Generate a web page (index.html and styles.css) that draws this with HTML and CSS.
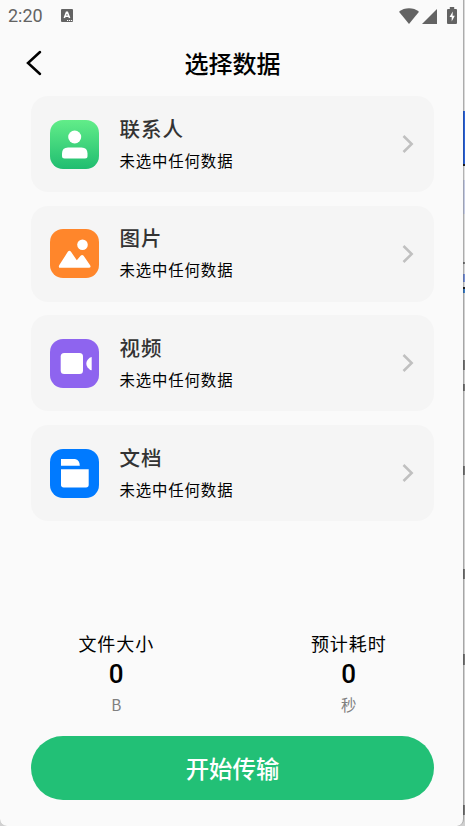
FILE: index.html
```
<!DOCTYPE html>
<html lang="zh-CN">
<head>
    <meta charset="UTF-8">
    <meta name="viewport" content="width=device-width, initial-scale=1.0">
    <title>选择数据</title>
    <link rel="stylesheet" href="styles.css">
</head>
<body>
    <div class="screen">
        <div class="status-bar">
            <span class="time">2:20</span>
            <svg class="input-icon" width="12" height="13" viewBox="0 0 12 13">
                <rect width="12" height="13" rx="1" fill="#636363"/>
                <path d="M3.300 9 5.500 3.200h.9L8.600 9M4.200 7.200h3.500" fill="none" stroke="#fff" stroke-width="1.600"/>
                <path d="M6 11.500h1.200M8 11.500h1.200M10 11.500h1.200" stroke="#fff" stroke-width="1"/>
            </svg>
            <div class="status-right">
                <svg class="wifi" width="20" height="16" viewBox="0 0 20 16">
                    <path d="M0 3.700C5.500-.8 14.500-.8 20 3.700L10 16Z" fill="#636363"/>
                </svg>
                <svg class="signal" width="15" height="15" viewBox="0 0 15 15">
                    <path d="M15 0v15H0Z" fill="#636363"/>
                </svg>
                <svg class="battery" width="10" height="17" viewBox="0 0 10 17">
                    <path d="M2.800 0h4.400v2H9q1 0 1 1v13q0 1-1 1H1q-1 0-1-1V3q0-1 1-1h1.800Z" fill="#636363"/>
                    <path d="M5.800 4.500 2.500 10h2.200v4.500L7.800 8.800H5.600Z" fill="#fff"/>
                </svg>
            </div>
        </div>

        <header class="header">
            <svg class="back" width="16" height="26" viewBox="0 0 16 26">
                <path d="M14 2 2 13 14 24" fill="none" stroke="#000" stroke-width="2.500" stroke-linecap="round"/>
            </svg>
            <h1>选择数据</h1>
        </header>

        <main class="list">
            <div class="card">
                <svg class="icon" viewBox="0 0 49 49">
                    <defs>
                        <linearGradient id="green" x1="0" y1="0" x2="0" y2="1">
                            <stop offset="0" stop-color="#62ed89"/>
                            <stop offset="1" stop-color="#20bd70"/>
                        </linearGradient>
                    </defs>
                    <rect width="49" height="49" rx="13" fill="url(#green)"/>
                    <circle cx="24.700" cy="17" r="6.500" fill="#fff"/>
                    <path d="M12 33.500q0-6 6-6h13.500q6 0 6 6v2.500q0 2.500-2.500 2.500H14.500Q12 38.500 12 36Z" fill="#fff"/>
                </svg>
                <div class="info">
                    <h2>联系人</h2>
                    <p>未选中任何数据</p>
                </div>
                <svg class="arrow" width="12" height="18" viewBox="0 0 12 18"><path d="m1.500 1 8.200 8-8.200 8"/></svg>
            </div>

            <div class="card">
                <svg class="icon" viewBox="0 0 49 49">
                    <rect width="49" height="49" rx="13" fill="#ff862b"/>
                    <circle cx="32.500" cy="15.700" r="5.300" fill="#fff"/>
                    <path d="M9.200 36.300 17.800 22.800q1.600-2 3.200 0l5.800 8.400 3.800-4.400q1.500-1.600 3 0l6.500 9.500q1.400 2.500-1.400 2.500H10.600Q8 38.800 9.200 36.300Z" fill="#fff"/>
                </svg>
                <div class="info">
                    <h2>图片</h2>
                    <p>未选中任何数据</p>
                </div>
                <svg class="arrow" width="12" height="18" viewBox="0 0 12 18"><path d="m1.500 1 8.200 8-8.200 8"/></svg>
            </div>

            <div class="card">
                <svg class="icon" viewBox="0 0 49 49">
                    <rect width="49" height="49" rx="13" fill="#8e64ef"/>
                    <rect x="10.700" y="14" width="22.300" height="21" rx="3.500" fill="#fff"/>
                    <path d="M41.700 18v13.200q-2 0-4.200-3-2.400-3.600 0-7.200 2.200-3 4.200-3Z" fill="#fff"/>
                </svg>
                <div class="info">
                    <h2>视频</h2>
                    <p>未选中任何数据</p>
                </div>
                <svg class="arrow" width="12" height="18" viewBox="0 0 12 18"><path d="m1.500 1 8.200 8-8.200 8"/></svg>
            </div>

            <div class="card">
                <svg class="icon" viewBox="0 0 49 49">
                    <rect width="49" height="49" rx="13" fill="#007aff"/>
                    <path d="M11 10h14q4.800 1 4.800 6.700H11Z" fill="#fff"/>
                    <path d="M11 20.200h27.700v15.500q0 2.700-2.700 2.700H13.700q-2.700 0-2.700-2.700Z" fill="#fff"/>
                </svg>
                <div class="info">
                    <h2>文档</h2>
                    <p>未选中任何数据</p>
                </div>
                <svg class="arrow" width="12" height="18" viewBox="0 0 12 18"><path d="m1.500 1 8.200 8-8.200 8"/></svg>
            </div>
        </main>

        <section class="stats">
            <div class="stat">
                <span class="label">文件大小</span>
                <span class="value">0</span>
                <span class="unit">B</span>
            </div>
            <div class="stat">
                <span class="label">预计耗时</span>
                <span class="value">0</span>
                <span class="unit">秒</span>
            </div>
        </section>

        <button class="start">开始传输</button>
    </div>
</body>
</html>
```
FILE: styles.css
```
* {
    box-sizing: border-box;
    margin: 0;
    padding: 0;
}

body {
    width: 465px;
    height: 826px;
    overflow: hidden;
    font-family: Roboto, "Noto Sans CJK SC", sans-serif;
    color: #000;
    /* window edge behind the phone screen */
    background: linear-gradient(to bottom, #d8d8d8 0 111px, #2c63d8 111px 164px, #222 164px 166px, #e0e0e0 166px 180px, #c5cbe2 180px 214px, #d8d8d8 214px 262px, #777 262px 264px, #d8d8d8 264px 274px, #7890d4 274px 282px, #d8d8d8 282px 287px, #222 287px 289px, #3a7cc4 289px 293px, #d0d0d0 293px 360px, #777 360px 370px, #d0d0d0 370px 384px, #777 384px 391px, #d0d0d0 391px 466px, #777 466px 475px, #d0d0d0 475px 569px, #777 569px 579px, #d0d0d0 579px 654px, #777 654px 665px, #d0d0d0 665px 805px, #777 805px 815px, #d0d0d0 815px);
}

.screen {
    width: 464px;
    height: 826px;
    background: #fafafa;
    background-clip: padding-box;
    border-right: 1px solid rgba(0, 0, 0, 0.2);
    border-radius: 0 0 7px 7px;
    display: flex;
    flex-direction: column;
}

.status-bar {
    height: 32px;
    display: flex;
    align-items: center;
    padding: 0 6px 0 8px;
}

.time {
    width: 53px;
    font-size: 18px;
    line-height: 32px;
    color: #636363;
}

.input-icon {
    margin-bottom: 1px;
}

.status-right {
    margin-left: auto;
    margin-bottom: 1px;
    display: flex;
    align-items: center;
}

.signal {
    margin: 1px 10px 0 3px;
}

.battery {
    margin-bottom: 1px;
}

.header {
    height: 64px;
    display: grid;
    grid-template-columns: 35px 1fr 35px;
    align-items: center;
    padding: 0 24px 0 26px;
}

.back {
    margin-bottom: 2px;
}

.header h1 {
    padding-top: 2px;
    font-size: 24px;
    font-weight: 500;
    line-height: 36px;
    text-align: center;
}

.list {
    display: flex;
    flex-direction: column;
    gap: 13.7px;
    padding: 0 29px 0 31px;
}

.card {
    height: 96px;
    display: flex;
    align-items: center;
    padding: 0 20px 0 19px;
    background: #f5f5f5;
    border-radius: 17px;
}

.icon {
    width: 49px;
    height: 49px;
    margin-right: 20.4px;
}

.info {
    padding-top: 1px;
}

.info h2 {
    font-size: 20.5px;
    font-weight: 500;
    line-height: 30px;
    letter-spacing: 1px;
    color: #333;
}

.info p {
    margin-top: 4px;
    font-size: 15.4px;
    line-height: 26px;
    letter-spacing: 0.9px;
}

.arrow {
    margin-left: auto;
    fill: none;
    stroke: #c0c0c0;
    stroke-width: 2.5;
}

.stats {
    display: grid;
    grid-template-columns: 1fr 1fr;
    margin-top: 110px;
    margin-right: -2px;
    height: 105px;
}

.stat {
    display: flex;
    flex-direction: column;
    align-items: center;
}

.label {
    font-size: 18px;
    line-height: 28px;
    letter-spacing: 0.9px;
}

.value {
    font-size: 26px;
    font-weight: 500;
    line-height: 30px;
}

.unit {
    font-family: "Noto Sans CJK SC", sans-serif;
    font-size: 15.4px;
    line-height: 30px;
    color: #808080;
}

.start {
    width: 403px;
    height: 64px;
    margin-left: 31px;
    border: none;
    border-radius: 32px;
    background: #22c076;
    color: #fff;
    font-family: inherit;
    font-size: 23.4px;
    font-weight: 500;
}
```
